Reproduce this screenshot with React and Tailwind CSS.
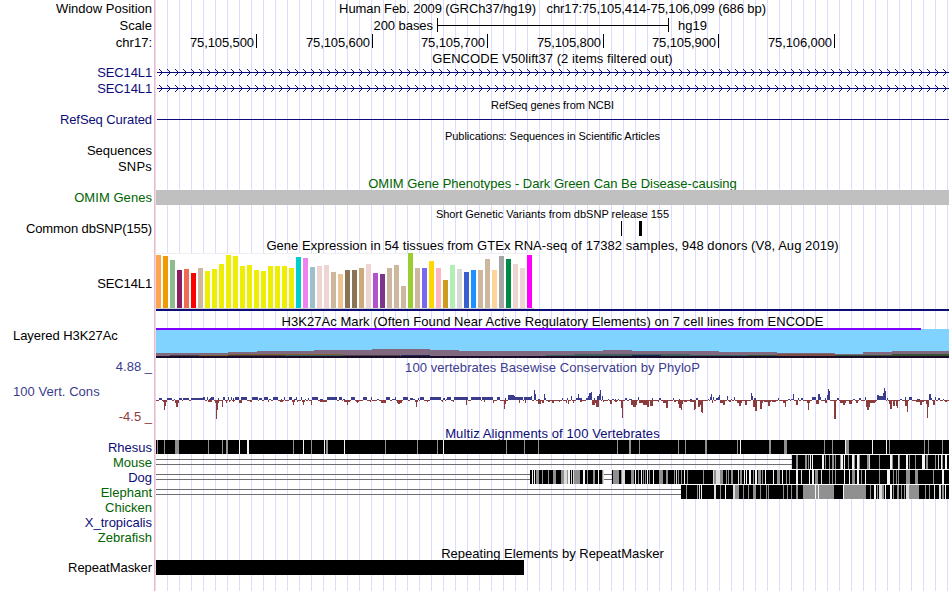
import React from "react";

const X0 = 156;
const W = 793;

// One browser row: fixed label gutter on the left, track area on the right.
function Row({ h, label, tone = "text-black", labelClass = "pt-0", children }) {
  return (
    <div className="flex" style={{ height: h }}>
      <div className={`w-[155px] shrink-0 border-r border-[#ffb4b4] bg-white pr-[2px] text-right ${tone} ${labelClass}`}>
        {label}
      </div>
      <div className="ml-px w-[793px] shrink-0">{children}</div>
    </div>
  );
}

function Title({ children, className = "" }) {
  return <div className={`text-center whitespace-pre ${className}`}>{children}</div>;
}

// Track drawing surface in genome-window pixel coordinates.
function Track({ y, h, children, className = "" }) {
  return (
    <svg width={W} height={h} viewBox={`${X0} ${y} ${W} ${h}`} shapeRendering="crispEdges" className={`block overflow-visible ${className}`}>
      {children}
    </svg>
  );
}

function Gene({ y, top, h }) {
  let d = "";
  for (let x = 159; x < 947; x += 8) d += `M${x} ${y - 3}h1v1h1v1h1v1h1v1h-1v1h-1v1h-1v1h-1v-1h1v-1h1v-1h1v-1h-1v-1h-1v-1h-1z`;
  return (
    <Track y={top} h={h}>
      <rect x="157" y={y} width="792" height="1" fill="#0c0c78" />
      <path d={d} fill="#0c0c78" />
    </Track>
  );
}

const TOPS = [45,48,60,90,87,99,84,93,87,72,45,48,78,75,90,93,78,78,78,84,51,54,81,78,75,96,102,90,90,84,72,99,102,84,75,138,39,84,84,63,84,120,75,87,96,90,90,57,90,48,57,72,84,45];
const TISSUES = (
  "FFA54F EE9A00 8FBC8F 8B1C62 EE6A50 FF0000 CDB79E " + "EEEE00 ".repeat(13) +
  "00CDCD EE82EE 9AC0CD EED5D2 EED5D2 CDB79E EEC591 8B7355 8B7355 CDAA7D EED5D2 B452CD 7A378B CDB79E CDB79E CDB79E 9ACD32 CDB79E 7A67EE FFD700 FFB6C1 CD9B1D B4EEB4 D9D9D9 3A5FCD 1E90FF CDB79E CDB79E FFD39B A6A6A6 008B45 EED5D2 EED5D2 FF00FF"
).split(" ");

// Conservation scores: [x, width, height]; positive is conserved.
const UP = [
  [159,3,2],[167,5,2],[174,1,1],[179,3,2],[183,6,2],[191,12,2],[203,2,3],[207,1,3],[209,2,1],[211,3,3],[210,1,2],[218,1,2],[223,2,3],[228,1,3],[231,1,3],[233,1,2],[235,4,3],[241,6,3],[252,6,3],[259,3,2],[264,4,3],[269,2,1],[273,5,3],[281,1,1],[284,1,3],[289,3,3],[294,2,1],[296,1,3],[301,1,3],[305,1,1],[308,1,2],[312,6,3],[320,3,1],[327,10,3],[339,3,3],[343,2,1],[351,4,3],[363,4,3],[371,1,3],[377,2,1],[386,4,3],[392,3,1],[395,1,3],[403,5,3],[410,3,2],[413,2,1],[418,1,2],
  [420,4,3],[430,4,3],[434,7,3],[443,2,2],[446,1,1],[447,4,3],[454,14,3],[471,3,3],[474,7,3],[482,11,3],[497,3,3],[505,1,2],[508,6,5],[514,1,4],[515,8,3],[524,8,3],[531,1,4],[534,1,10],[535,1,6],[538,2,1],[544,1,6],[545,1,2],[562,1,2],[567,1,2],[571,1,4],[576,2,2],[578,1,6],[579,3,2],[586,3,2],[588,4,4],[589,3,7],[591,1,8],[594,1,2],[597,4,4],[599,2,6],[600,1,10],[602,1,4],[608,1,1],[612,2,1],[615,1,1],[618,1,1],[625,2,2],[629,3,1],[638,1,3],
  [652,1,2],[659,2,2],[673,1,2],[679,1,1],[690,2,1],[696,2,2],[708,1,1],[710,1,3],[711,1,6],[713,1,3],[716,2,2],[718,2,3],[719,1,5],[727,1,4],[731,1,1],[734,1,3],[751,1,7],[752,1,4],[754,2,2],[778,1,2],[788,2,1],[791,3,1],[793,1,6],[798,1,2],[801,2,2],[812,4,3],[818,2,6],[820,1,3],[825,1,2],[827,1,5],[828,1,11],[829,1,9],[837,2,2],[853,2,1],[859,2,2],[865,1,3],[877,2,5],[879,4,4],[883,3,7],[884,1,12],[885,1,9],[887,1,2],[900,2,1],[905,1,3],[909,3,3],[917,3,1],[929,2,6],[931,1,2],[935,1,3],[938,2,2],[943,1,1],
];
const DOWN = [
  [163,4,2],[164,1,10],[165,1,6],[175,4,3],[176,2,7],[208,4,2],[215,4,3],[216,1,19],[217,1,10],[222,1,7],[226,1,3],[229,1,2],[233,1,2],[239,3,3],[250,2,2],[268,1,2],[280,3,2],[292,3,2],[293,1,5],[297,1,2],[302,3,2],[303,1,5],[311,1,5],[320,7,2],[344,6,2],[347,1,5],[356,3,2],[357,1,3],[370,1,2],[381,5,3],[397,5,3],[398,2,4],[415,3,2],[416,1,7],
  [427,1,2],[442,1,2],[453,1,2],[466,1,5],[484,1,2],[493,1,3],[504,1,9],[505,1,4],[519,1,3],[525,1,3],[538,3,4],[542,2,3],[548,2,2],[552,2,3],[559,1,2],[566,1,3],[568,1,4],[573,1,3],[580,2,2],[592,3,5],[595,1,3],[596,3,7],[603,1,2],[610,2,4],[615,2,2],[621,2,8],[622,1,18],[631,6,5],[633,3,7],[639,4,3],[643,3,5],[645,2,5],[647,2,7],[650,3,6],[658,1,2],[663,3,3],[666,2,8],[674,2,2],[678,5,4],[679,3,8],[681,1,10],[684,3,2],
  [690,4,2],[694,1,10],[695,1,9],[698,2,7],[700,2,5],[701,2,12],[702,1,13],[712,1,3],[720,5,3],[723,2,5],[729,2,2],[737,5,3],[739,2,6],[745,2,5],[753,3,7],[755,2,11],[756,1,5],[760,2,9],[762,1,3],[764,7,2],[768,2,6],[772,4,2],[783,3,3],[785,1,7],[796,2,5],[807,3,3],[808,1,10],[816,3,4],[825,2,3],[834,2,19],[840,6,3],[843,2,5],[849,3,4],[856,2,3],[866,4,7],[867,2,10],[870,5,3],[875,1,2],[889,3,4],[890,2,9],[893,2,6],[896,2,6],[897,1,8],[905,3,6],[907,1,12],[916,8,2],[920,2,5],[926,3,4],[927,1,18],[928,1,7],[933,2,5],[945,2,2],
];

// The thin negative baseline only shows where no positive score is drawn.
const BASELINE = Array.from({ length: W }, (_, i) => X0 + i)
  .filter((x) => !UP.some(([a, w]) => x >= a && x < a + w))
  .map((x) => `M${x} 400h1v1h-1z`)
  .join("");

// Alignment gaps: "x w tone" with g = grey, w = white, l = light grey.
const TONE = { g: "#909090", w: "#f4f4f4", l: "#dcdcdc" };
const RHESUS = "157 1 g,164 1 g,175 4 g,208 1 g,222 1 g,226 2 g,239 1 w,247 2 w,293 1 g,303 1 w,311 1 g,324 1 w,326 2 g,344 1 w,385 1 g,417 1 g,437 1 g,443 1 w,506 1 g,524 1 g,538 1 g,617 1 g,629 2 g,639 1 g,678 1 g,685 1 g,705 2 g,737 1 g,740 1 w,769 2 g,784 3 g,824 1 g,832 1 g,845 1 w,846 3 g,872 1 w,886 1 w,889 1 g,924 1 g,928 1 g,942 1 g";
const MOUSE = "796 2 g,805 2 g,808 1 g,810 1 w,812 1 w,822 2 w,825 1 g,829 1 g,832 2 g,835 1 g,840 1 g,841 2 w,844 1 w,848 1 g,852 2 w,854 1 g,857 2 w,859 1 g,867 2 g,869 1 l,879 1 g,890 2 w,892 1 g,898 1 l,899 1 g,906 2 w,909 1 g,915 1 g,922 3 w,926 2 g,935 1 g,938 1 l,941 1 w,942 1 g,945 2 w";
const DOG = "532 1 w,534 1 w,536 2 g,538 1 g,542 1 g,548 1 g,553 3 g,561 3 g,564 3 l,567 1 g,568 2 w,571 1 l,573 1 l,574 6 g,583 2 w,587 1 g,593 2 g,598 1 w,602 1 g,603 1 l,613 6 g,621 1 g,622 3 l,631 3 g,635 1 w,638 1 g,641 1 w,643 1 g,645 1 g,647 1 w,649 1 g,653 1 w,659 4 g,666 2 g,674 1 g,676 1 l,678 1 g,681 1 g,684 1 w,687 1 g,703 1 g,713 1 l,714 2 g,716 4 l,720 3 g,726 1 g,728 1 g,731 2 g,738 1 l,740 2 g,744 1 w,746 1 w,749 2 w,753 1 g,755 2 w,758 3 g,762 1 g,765 1 w,773 1 w,777 3 g,782 1 w,786 1 g,789 1 g,796 2 w,801 1 l,809 1 w,812 2 w,815 3 g,821 1 l,829 1 g,832 1 g,835 1 g,844 1 w,849 1 w,852 3 g,857 2 w,861 1 g,865 1 w,879 1 g,887 3 w,893 1 g,896 1 g,898 1 g,906 4 g,915 3 g,933 1 g,942 2 w";
const ELEPHANT = "686 1 g,697 1 g,699 1 l,701 1 w,714 2 l,720 1 g,725 1 w,733 2 l,735 4 g,743 1 g,748 1 g,753 3 g,760 1 g,766 1 g,768 1 g,783 1 g,787 1 g,791 1 g,796 2 g,803 12 g,815 1 w,816 2 g,818 1 w,819 15 g,843 1 w,844 22 g,870 1 g,874 2 w,877 1 g,879 3 l,882 2 g,885 1 w,890 2 w,893 1 g,897 2 g,901 1 g,904 1 g,906 3 l,909 10 g,925 1 g,929 1 g,934 1 l,939 2 l,942 2 g,945 1 w";

function Alignment({ y, spans, gaps, thin }) {
  return (
    <Track y={y} h={15}>
      {thin && <path d={`M156 ${y + 4.5}H${thin}M156 ${y + 9.5}H${thin}`} stroke="#6e6e6e" />}
      {spans.length > 1 && <path d={`M604 ${y + 4.5}H612M604 ${y + 9.5}H612`} stroke="#6e6e6e" />}
      {spans.map(([a, b]) => <rect key={a} x={a} y={y} width={b - a} height="14" />)}
      {gaps.split(",").map((s) => {
        const [x, w, t] = s.split(" ");
        return <rect key={s} x={x} y={y} width={w} height="14" fill={TONE[t]} />;
      })}
      {thin && <rect x={spans[0][0]} y={y - 1} width={949 - spans[0][0]} height="1" fill="#fff" />}
    </Track>
  );
}

const NAVY = "text-[#0c0c78]";
const GREEN = "text-[#006400]";

export default function App() {
  return (
    <div className="h-[591px] w-[950px] overflow-hidden bg-white">
      <div className="flex h-full w-[949px] flex-col bg-[repeating-linear-gradient(to_right,transparent_0_11px,#dcdcff_11px_12px)] font-['Liberation_Sans',Arial,sans-serif] text-[13px] leading-4 text-black">
        <Row h={17} label="Window Position" labelClass="pt-px">
          <Title className="pt-px tracking-[-0.09px]">{"Human Feb. 2009 (GRCh37/hg19)   chr17:75,105,414-75,106,099 (686 bp)"}</Title>
        </Row>
        <Row h={17} label="Scale" labelClass="pt-px">
          <div className="flex">
            <div className="w-[277px] pt-px text-right tracking-[-0.05px]">200 bases</div>
            <div className="ml-1 mt-px flex h-[14px] w-[232px] items-center border-x border-black">
              <div className="h-px w-full bg-black" />
            </div>
            <div className="ml-[9px] pt-px">hg19</div>
          </div>
        </Row>
        <Row h={16} label="chr17:" labelClass="pt-px">
          <div className="flex h-[14px] text-right leading-[18px] tracking-[-0.1px] [&>div]:border-r [&>div]:border-black [&>div]:pr-[2px]">
            <div className="w-[101px]">75,105,500</div>
            <div className="w-[116px]">75,105,600</div>
            <div className="w-[115px]">75,105,700</div>
            <div className="w-[116px]">75,105,800</div>
            <div className="w-[115px]">75,105,900</div>
            <div className="w-[116px]">75,106,000</div>
          </div>
        </Row>
        <Row h={15}><Title className="pt-px tracking-[0.05px]">GENCODE V50lift37 (2 items filtered out)</Title></Row>
        <Row h={15} label="SEC14L1" tone={NAVY} labelClass="tracking-[-0.13px]"><Gene y={72} top={65} h={15} /></Row>
        <Row h={17} label="SEC14L1" tone={NAVY} labelClass="pt-px tracking-[-0.13px]"><Gene y={88} top={80} h={17} /></Row>
        <Row h={15}><Title className="text-[11px] tracking-[-0.05px]">RefSeq genes from NCBI</Title></Row>
        <Row h={16} label="RefSeq Curated" tone={NAVY} labelClass="tracking-[-0.08px]">
          <Track y={112} h={16}><rect x="157" y="119" width="792" height="1" fill="#0c0c78" /></Track>
        </Row>
        <Row h={15}><Title className="text-[11px] tracking-[-0.06px]">Publications: Sequences in Scientific Articles</Title></Row>
        <Row h={16} label="Sequences" />
        <Row h={16} label="SNPs" labelClass="tracking-[0.2px]" />
        <Row h={15}><Title className={`pt-px ${GREEN}`}>OMIM Gene Phenotypes - Dark Green Can Be Disease-causing</Title></Row>
        <Row h={16} label="OMIM Genes" tone={GREEN} labelClass="tracking-[0.05px]"><div className="relative h-[15px] bg-[#c0c0c0]" /></Row>
        <Row h={15}><Title className="text-[11px]">Short Genetic Variants from dbSNP release 155</Title></Row>
        <Row h={16} label="Common dbSNP(155)" labelClass="tracking-[-0.11px]">
          <Track y={221} h={16}>
            <rect x="621" y="221" width="1" height="15" />
            <rect x="639" y="221" width="3" height="15" />
          </Track>
        </Row>
        <Row h={16}><Title className="relative pt-px tracking-[0.055px]">Gene Expression in 54 tissues from GTEx RNA-seq of 17382 samples, 948 donors (V8, Aug 2019)</Title></Row>
        <Row h={60} label="SEC14L1" labelClass="pt-[23px] tracking-[-0.13px]">
          <Track y={253} h={60}>
            <rect x="156" y="253" width="378" height="56" fill="#fff" />
            <rect x="156" y="253" width="378" height="1" fill="#f0f0f0" />
            <rect x="156" y="308" width="378" height="1" fill="#d0d0d0" />
            {TOPS.map((t, i) => (
              <rect key={i} x={156 + 7 * i} y={240 + t / 3} width="5" height={68 - t / 3} fill={"#" + TISSUES[i]} />
            ))}
            <rect x="156" y="309" width="793" height="2" fill="#0c0c78" />
          </Track>
        </Row>
        <Row h={15}><Title className="pt-px tracking-[0.05px]">H3K27Ac Mark (Often Found Near Active Regulatory Elements) on 7 cell lines from ENCODE</Title></Row>
        <Row h={31} label="Layered H3K27Ac" labelClass="pl-[13px] !text-left tracking-[-0.05px]">
          <Track y={328} h={31}>
            <rect x="156" y="329" width="793" height="29" fill="#80d2ff" />
            <rect x="156" y="328" width="765" height="2" fill="#8000ff" />
            <path fill="#80687f" d="M156 353H228V352H257V351H314V350H372V349H430V350H459V351H603V350H632V351H719V352H777V353H835V354H863V352H892V351H949V358H156z" />
            <path fill="#4b3b42" d="M156 356H170V355H228V354H343V355H400V356H546V358H156z" />
            <path fill="#806030" d="M199 356H228V355H199zM228 354H343V355H228z" />
            <path fill="#406060" d="M546 355H574V354H690V355H748V357H546zM285 355H343V356H285z" />
            <path fill="#804e40" d="M777 354H835V356H777z" />
            <path fill="#375030" d="M748 355H777V356H835V355H892V354H949V357H748z" />
            <path fill="#202858" d="M401 355H430V356H401zM632 355H661V356H632z" />
            <path fill="#180c28" d="M156 356H949V358H156z" />
          </Track>
        </Row>
        <Row h={27} label="4.88 _" tone="text-[#3c3c8c]"><Title className="pt-px tracking-[0.06px] text-[#3c3c8c]">100 vertebrates Basewise Conservation by PhyloP</Title></Row>
        <Row
          h={40}
          labelClass="pl-[13px]"
          label={
            <div className="flex flex-col">
              <span className="mt-[-2px] text-left tracking-[0.05px] text-[#3c3c8c]">100 Vert. Cons</span>
              <span className="mt-[9px] text-[#8c3c3c]">-4.5 _</span>
            </div>
          }
        >
          <Track y={386} h={40}>
            <path d={BASELINE} fill="#8c3c3c" />
            {DOWN.map(([x, w, h], i) => <rect key={i} x={x} y="400" width={w} height={h} fill="#8c3c3c" />)}
            {UP.map(([x, w, h], i) => <rect key={i} x={x} y={400 - h} width={w} height={h} fill="#3c3c8c" />)}
          </Track>
        </Row>
        <Row h={14}><Title className={`tracking-[0.1px] ${NAVY}`}>Multiz Alignments of 100 Vertebrates</Title></Row>
        <Row h={15} label="Rhesus" tone={NAVY}><Alignment y={440} spans={[[156, 949]]} gaps={RHESUS} /></Row>
        <Row h={15} label="Mouse" tone={GREEN}><Alignment y={455} spans={[[792, 949]]} gaps={MOUSE} thin={792} /></Row>
        <Row h={15} label="Dog" tone={NAVY}><Alignment y={470} spans={[[530, 604], [612, 949]]} gaps={DOG} thin={530} /></Row>
        <Row h={15} label="Elephant" tone={GREEN}><Alignment y={485} spans={[[681, 949]]} gaps={ELEPHANT} thin={681} /></Row>
        <Row h={15} label="Chicken" tone={GREEN} />
        <Row h={15} label="X_tropicalis" tone={NAVY} />
        <Row h={15} label="Zebrafish" tone={GREEN} />
        <Row h={15}><Title className="pt-px">Repeating Elements by RepeatMasker</Title></Row>
        <Row h={31} label="RepeatMasker" labelClass="tracking-[-0.05px]"><div className="relative h-[15px] w-[368px] bg-black" /></Row>
      </div>
    </div>
  );
}
